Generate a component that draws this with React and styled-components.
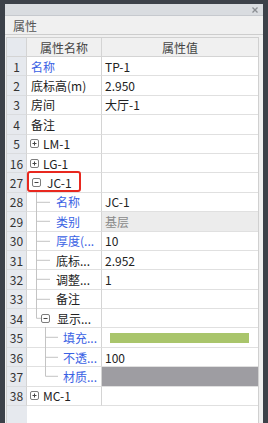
import React from 'react';
import styled, { createGlobalStyle } from 'styled-components';

const Global = createGlobalStyle`
  html, body { margin: 0; padding: 0; height: 100%; }
  body {
    background: #3c4149;
    font-family: "Noto Sans CJK SC", "Noto Sans", sans-serif;
    font-size: 12px;
    color: #222;
    overflow: hidden;
  }
  #root { height: 100%; }
`;

const Frame = styled.div`
  height: 100%;
  box-sizing: border-box;
  padding: 4px 5px 0 5px;
  display: flex;
`;

const Window = styled.div`
  flex: 1;
  display: flex;
  flex-direction: column;
  background: #f0f0f0;
  min-width: 0;
`;

const TitleBar = styled.div`
  height: 11px;
  flex: none;
  background: #d9dce0;
  border-bottom: 1px solid #c6c9ce;
  display: flex;
  justify-content: flex-end;
  align-items: center;
  padding-right: 5px;
`;

const Section = styled.div`
  height: 18px;
  flex: none;
  display: flex;
  align-items: center;
  padding-left: 8px;
  color: #555;
  border-bottom: 1px solid #cdcdcd;
`;

const Table = styled.div`
  flex: 1;
  min-height: 0;
  margin: 2px 4px 0 1px;
  border: 1px solid #d0d0d0;
  border-bottom: none;
  background: #fff;
  display: flex;
  flex-direction: column;
`;

const Row = styled.div`
  display: grid;
  grid-template-columns: 20px 75px 1fr;
  grid-template-rows: 100%;
  height: ${p => (p.$header ? '19px' : '19.4px')};
  flex: none;
`;

const Cell = styled.div`
  box-sizing: border-box;
  height: 100%;
  border-right: 1px solid #d4d4d4;
  border-bottom: 1px solid #e0e0e0;
  display: flex;
  align-items: center;
  white-space: nowrap;
  overflow: visible;
  position: relative;
  min-width: 0;
`;

const HeadCell = styled(Cell)`
  background: ${p => (p.$num ? '#e6e9ee' : '#f0f0f0')};
  justify-content: center;
  color: #444;
  border-bottom-color: #d4d4d4;
  border-right: ${p => (p.$last ? 'none' : '1px solid #d4d4d4')};
`;

const NumCell = styled(Cell)`
  background: #e6e9ee;
  justify-content: center;
  color: #333;
  border-bottom-color: #dadcdf;
`;

const NameCell = styled(Cell)`
  padding-left: ${p => p.$pad}px;
  color: ${p => (p.$blue ? '#3a62e4' : '#222')};
`;

const ValueCell = styled(Cell)`
  padding-left: 3px;
  background: ${p => p.$bg || '#fff'};
  color: ${p => (p.$muted ? '#8a8a8a' : '#222')};
  border-right: none;
`;

const Swatch = styled.div`
  flex: 1;
  height: 10px;
  margin: 0 9px 0 5px;
  background: #a9c56b;
`;

const Filler = styled.div`
  flex: 1;
  display: grid;
  grid-template-columns: 20px 1fr;
`;

const FillNum = styled.div`
  background: #e6e9ee;
`;

const GuideSvg = styled.svg`
  flex: none;
  align-self: flex-start;
  height: calc(100% + 1px);
  overflow: visible;
  position: relative;
  z-index: 1;
`;

const ToggleBox = styled.span`
  flex: none;
  box-sizing: border-box;
  width: 9px;
  height: 9px;
  border: 1px solid #7d7d7d;
  border-radius: 2px;
  background: #fff;
  margin-left: ${p => p.$ml || 0}px;
  margin-right: ${p => p.$mr}px;
  display: flex;
  align-items: center;
  justify-content: center;
`;

const Label = styled.span`
  display: block;
`;

const Highlight = styled.span`
  position: absolute;
  left: 0;
  top: -2px;
  width: 54px;
  height: 21px;
  box-sizing: border-box;
  border: 2px solid #e8281f;
  border-radius: 3px;
  z-index: 2;
  pointer-events: none;
`;

const CloseIcon = () => (
  <svg width="6" height="6" viewBox="0 0 6 6">
    <path d="M0.5 0.5 L5.5 5.5 M5.5 0.5 L0.5 5.5" stroke="#8a8d92" strokeWidth="1.3" />
  </svg>
);

const Toggle = ({ open, ml, mr }) => (
  <ToggleBox $ml={ml} $mr={mr}>
    <svg width="7" height="7" viewBox="0 0 7 7">
      <path d="M1.5 3.5 H5.5" stroke="#444" strokeWidth="1" />
      {!open && <path d="M3.5 1.5 V5.5" stroke="#444" strokeWidth="1" />}
    </svg>
  </ToggleBox>
);

const LINE = '#c4c4c4';

const Guide = ({ x, full, hEnd, width }) => (
  <GuideSvg width={width}>
    <line x1={x + 0.5} x2={x + 0.5} y1="-1" y2={full ? '100%' : '48%'} stroke={LINE} strokeWidth="1" />
    <line x1={x + 0.5} x2={hEnd} y1="48%" y2="48%" stroke={LINE} strokeWidth="1" />
  </GuideSvg>
);

const rows = [
  { n: 1, name: '名称', blue: true, value: 'TP-1' },
  { n: 2, name: '底标高(m)', value: '2.950' },
  { n: 3, name: '房间', value: '大厅-1' },
  { n: 4, name: '备注' },
  { n: 5, name: 'LM-1', toggle: 'closed' },
  { n: 16, name: 'LG-1', toggle: 'closed' },
  { n: 27, name: 'JC-1', toggle: 'open', highlight: true },
  { n: 28, name: '名称', blue: true, level: 1, value: 'JC-1' },
  { n: 29, name: '类别', blue: true, level: 1, value: '基层', muted: true, bg: '#ececec' },
  { n: 30, name: '厚度(...', blue: true, level: 1, value: '10' },
  { n: 31, name: '底标...', level: 1, value: '2.952' },
  { n: 32, name: '调整...', level: 1, value: '1' },
  { n: 33, name: '备注', level: 1 },
  { n: 34, name: '显示...', level: 1, last: true, toggle: 'open' },
  { n: 35, name: '填充...', blue: true, level: 2, swatch: true },
  { n: 36, name: '不透...', blue: true, level: 2, value: '100' },
  { n: 37, name: '材质...', blue: true, level: 2, last: true, bg: '#9e9da2' },
  { n: 38, name: 'MC-1', toggle: 'closed' },
];

const NameContent = ({ r }) => {
  if (r.level === 1 && r.toggle) {
    return (
      <>
        <Guide width={14} x={9} full={false} hEnd={14} />
        <Toggle open ml={0} mr={7} />
        <Label>{r.name}</Label>
      </>
    );
  }
  if (r.level === 1) {
    return (
      <>
        <Guide width={29} x={9} full hEnd={23} />
        <Label>{r.name}</Label>
      </>
    );
  }
  if (r.level === 2) {
    return (
      <>
        <Guide width={36} x={18} full={!r.last} hEnd={31} />
        <Label>{r.name}</Label>
      </>
    );
  }
  if (r.toggle) {
    const open = r.toggle === 'open';
    return (
      <>
        <Toggle open={open} ml={open ? 5 : 3} mr={open ? 6 : 4} />
        <Label>{r.name}</Label>
        {r.highlight && <Highlight />}
      </>
    );
  }
  return <Label>{r.name}</Label>;
};

export default function App() {
  return (
    <>
      <Global />
      <Frame>
        <Window>
          <TitleBar>
            <CloseIcon />
          </TitleBar>
          <Section>属性</Section>
          <Table>
            <Row $header>
              <HeadCell $num />
              <HeadCell>属性名称</HeadCell>
              <HeadCell $last>属性值</HeadCell>
            </Row>
            {rows.map(r => (
              <Row key={r.n}>
                <NumCell>{r.n}</NumCell>
                <NameCell $pad={r.level || r.toggle ? 0 : 4} $blue={r.blue}>
                  <NameContent r={r} />
                </NameCell>
                <ValueCell $bg={r.bg} $muted={r.muted}>
                  {r.swatch ? <Swatch /> : r.value}
                </ValueCell>
              </Row>
            ))}
            <Filler>
              <FillNum />
              <div />
            </Filler>
          </Table>
        </Window>
      </Frame>
    </>
  );
}
